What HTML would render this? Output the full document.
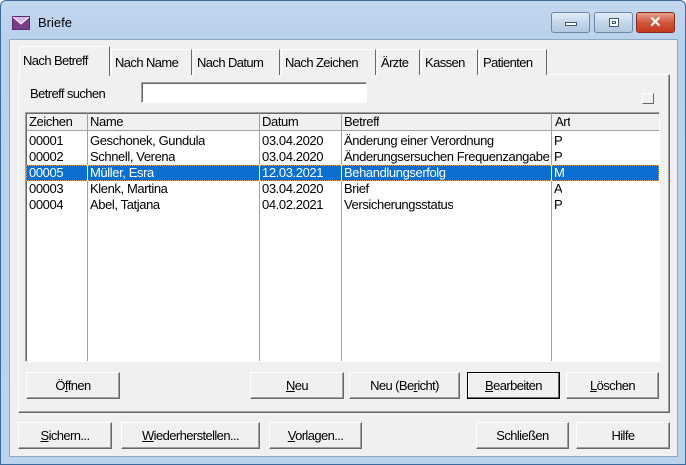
<!DOCTYPE html>
<html><head><meta charset="utf-8"><style>
*{box-sizing:border-box;margin:0;padding:0}
body{width:686px;height:465px;overflow:hidden;background:#fff;font-family:"Liberation Sans",sans-serif;font-size:12px;color:#000;position:relative}
.win{position:absolute;left:0;top:0;width:686px;height:465px;border:1px solid #3c6a9c;border-radius:6px 6px 0 0;background:linear-gradient(#c3d7ee,#b9d1ec 40px,#bcd3ed)}
.client{position:absolute;left:8px;top:38px;width:669px;height:418px;background:#f0f0f0;border:1px solid #8ea9c8}
.a{position:absolute;white-space:nowrap}
.tb{position:absolute;top:11px;height:21px;border:1px solid #6d87a8;border-radius:3px;background:linear-gradient(#e2ecf7,#c5d6ea 50%,#b3c8e2)}
.tab{position:absolute;top:48px;height:26px;background:#f0f0f0;border:1px solid #fff;border-right:1px solid #696969;border-bottom:none;padding:5px 0 0 3px;font-size:13px;letter-spacing:-0.6px}
.btn{position:absolute;height:27px;background:#f0f0f0;border:1px solid;border-color:#fff #696969 #696969 #fff;box-shadow:inset -1px -1px #a0a0a0;text-align:center;line-height:25px;font-size:13px;letter-spacing:-0.6px}
.col{position:absolute;top:0;height:248px;border-left:1px solid #a0a0a0}
.row{position:absolute;left:0;width:633px;height:16px;line-height:16px;font-size:13px;letter-spacing:-0.4px}
.row span{position:absolute;top:0;overflow:hidden}
</style></head><body>
<div class="win">
<svg style="position:absolute;left:11px;top:15px" width="18" height="14"><rect x="0.5" y="0.5" width="17" height="13" fill="#7a3d8a" stroke="#5a2a6a"/><path d="M1 1 L9 8 L17 1" fill="#d9b8e6" stroke="#fff"/></svg>
<div class="a" style="left:37px;top:14px;font-size:13px">Briefe</div>
<div class="tb" style="left:550px;width:39px"><div style="position:absolute;left:13px;top:9px;width:12px;height:4px;background:#fff;border:1px solid #44586f"></div></div>
<div class="tb" style="left:593px;width:39px"><div style="position:absolute;left:14px;top:5px;width:10px;height:9px;border:1px solid #44586f;background:#fff"><div style="margin:2px;height:3px;border:1px solid #44586f"></div></div></div>
<div class="tb" style="left:635px;width:39px;border-color:#8a2a1a;background:linear-gradient(#e8a08e,#d0573c 50%,#c2391d)"><div style="position:absolute;left:12px;top:0;color:#fff;font-weight:bold;font-size:15px;line-height:19px">✕</div></div>
<div class="client"></div>
<div class="a" style="left:17px;top:73px;width:652px;height:339px;border:1px solid;border-color:#fff #696969 #696969 #fff;box-shadow:inset -1px -1px #a0a0a0"></div>
<div class="tab" style="left:110px;width:81px">Nach Name</div>
<div class="tab" style="left:192px;width:87px">Nach Datum</div>
<div class="tab" style="left:280px;width:95px">Nach Zeichen</div>
<div class="tab" style="left:376px;width:43px">Ärzte</div>
<div class="tab" style="left:420px;width:57px">Kassen</div>
<div class="tab" style="left:478px;width:68px">Patienten</div>
<div class="tab" style="left:18px;top:45px;width:91px;height:30px;padding-top:6px">Nach Betreff</div>
<div class="a" style="left:29px;top:85px;font-size:13px;letter-spacing:-0.6px">Betreff suchen</div>
<div class="a" style="left:140px;top:81px;width:226px;height:21px;background:#fff;border:1px solid;border-color:#a0a0a0 #fff #fff #a0a0a0;box-shadow:inset 1px 1px #696969"></div>
<div class="a" style="left:641px;top:92px;width:12px;height:11px;border:1px solid;border-color:#fff #696969 #696969 #fff"></div>
<div class="a" style="left:24px;top:111px;width:635px;height:250px;background:#fff;border:1px solid;border-color:#a0a0a0 #fff #fff #a0a0a0;box-shadow:inset 1px 1px #696969">
 <div class="a" style="left:1px;top:1px;width:632px;height:17px;background:#f0f0f0;border-bottom:1px solid #a0a0a0"></div>
 <div class="col" style="left:61px"></div><div class="col" style="left:233px"></div><div class="col" style="left:315px"></div><div class="col" style="left:525px"></div>
 <div class="row" style="top:1px"><span style="left:3px">Zeichen</span><span style="left:64px">Name</span><span style="left:236px">Datum</span><span style="left:318px">Betreff</span><span style="left:529px">Art</span></div>
 <div class="row" style="top:20px"><span style="left:3px">00001</span><span style="left:64px">Geschonek, Gundula</span><span style="left:236px">03.04.2020</span><span style="left:318px">Änderung einer Verordnung</span><span style="left:528px">P</span></div>
 <div class="row" style="top:36px"><span style="left:3px">00002</span><span style="left:64px">Schnell, Verena</span><span style="left:236px">03.04.2020</span><span style="left:318px;width:207px">Änderungsersuchen Frequenzangabe</span><span style="left:528px">P</span></div>
 <div class="row" style="top:52px;background:#0a6fd0;color:#fff;outline:1px dotted #e0a060;outline-offset:-1px"><span style="left:3px">00005</span><span style="left:64px">Müller, Esra</span><span style="left:236px">12.03.2021</span><span style="left:318px">Behandlungserfolg</span><span style="left:528px">M</span>
  <i style="position:absolute;left:61px;top:0;height:16px;border-left:1px solid #fff"></i><i style="position:absolute;left:233px;top:0;height:16px;border-left:1px solid #fff"></i><i style="position:absolute;left:315px;top:0;height:16px;border-left:1px solid #fff"></i><i style="position:absolute;left:525px;top:0;height:16px;border-left:1px solid #fff"></i></div>
 <div class="row" style="top:68px"><span style="left:3px">00003</span><span style="left:64px">Klenk, Martina</span><span style="left:236px">03.04.2020</span><span style="left:318px">Brief</span><span style="left:528px">A</span></div>
 <div class="row" style="top:84px"><span style="left:3px">00004</span><span style="left:64px">Abel, Tatjana</span><span style="left:236px">04.02.2021</span><span style="left:318px">Versicherungsstatus</span><span style="left:528px">P</span></div>
</div>
<div class="btn" style="left:25px;top:371px;width:94px">Ö<u>f</u>fnen</div>
<div class="btn" style="left:249px;top:371px;width:94px"><u>N</u>eu</div>
<div class="btn" style="left:348px;top:371px;width:111px">Neu (Be<u>r</u>icht)</div>
<div class="btn" style="left:466px;top:371px;width:93px;border:1px solid #000;box-shadow:inset -1px -1px #696969,inset 1px 1px #fff"><u>B</u>earbeiten</div>
<div class="btn" style="left:565px;top:371px;width:93px"><u>L</u>öschen</div>
<div class="btn" style="left:17px;top:421px;width:94px"><u>S</u>ichern...</div>
<div class="btn" style="left:120px;top:421px;width:139px"><u>W</u>iederherstellen...</div>
<div class="btn" style="left:268px;top:421px;width:93px"><u>V</u>orlagen...</div>
<div class="btn" style="left:475px;top:421px;width:93px">Schließen</div>
<div class="btn" style="left:575px;top:421px;width:94px">Hilfe</div>
</div>
</body></html>
